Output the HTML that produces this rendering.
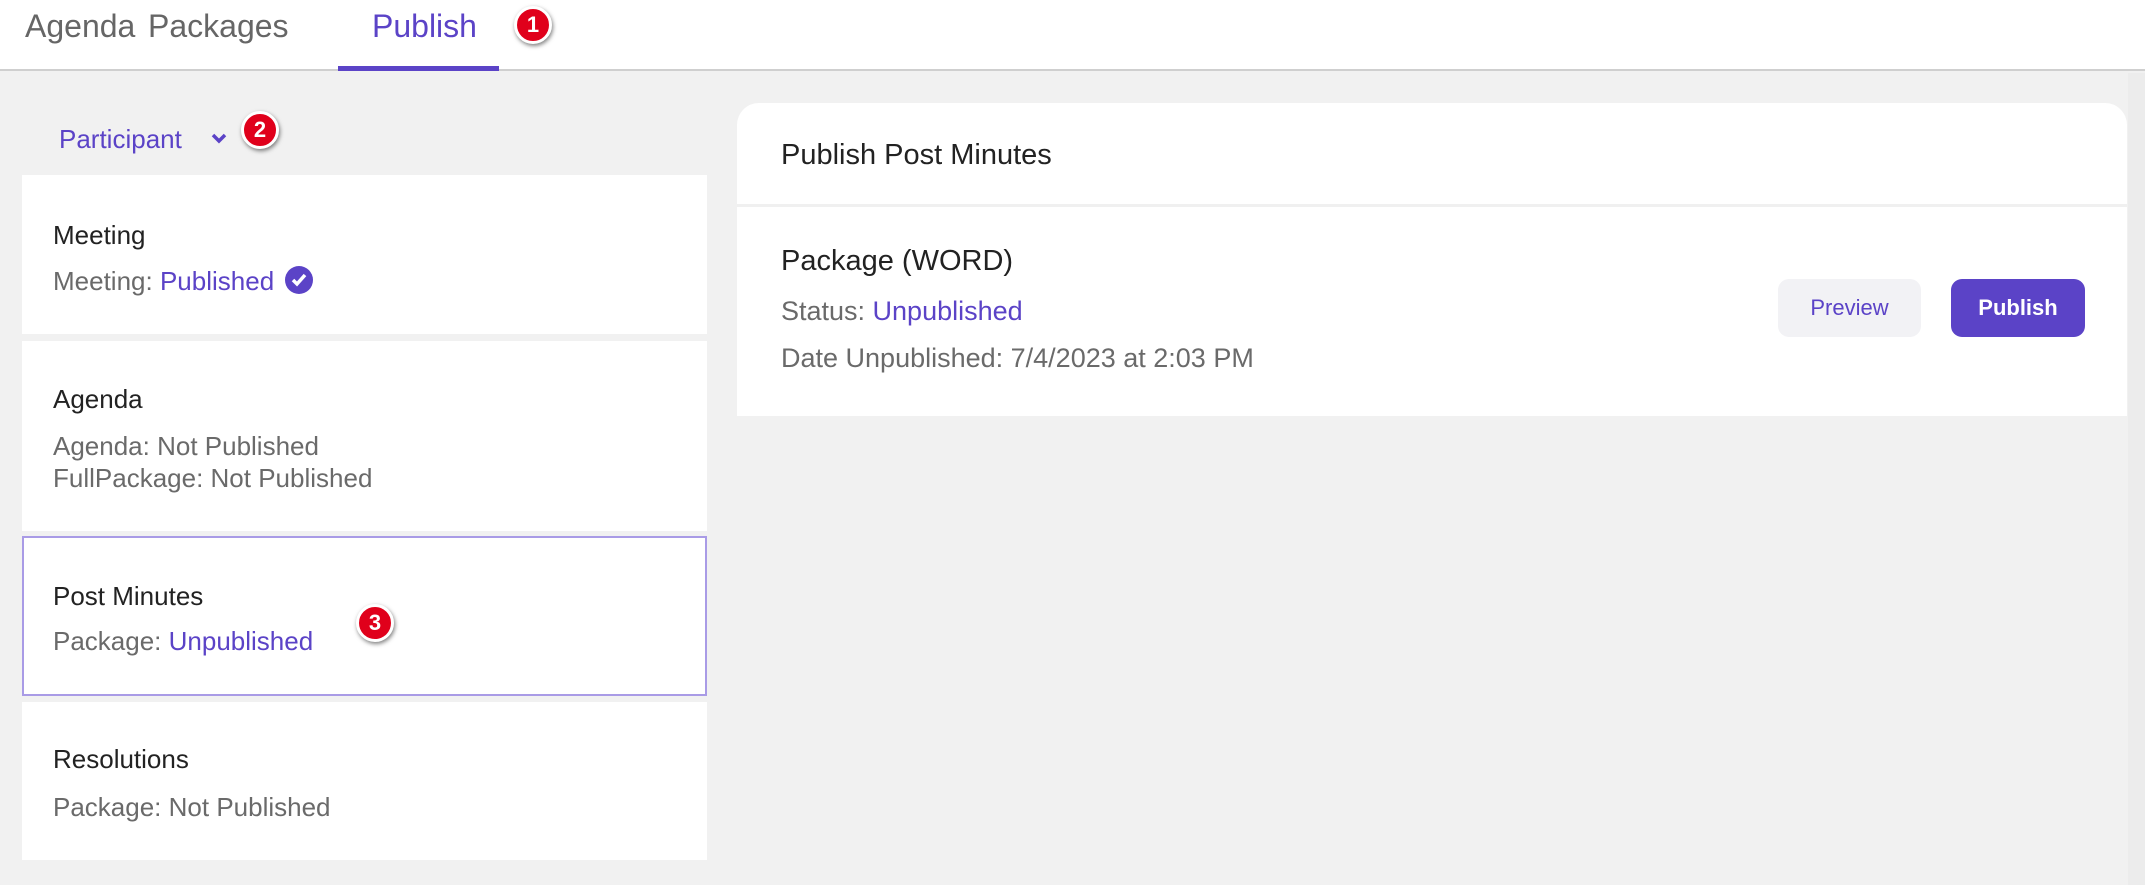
<!DOCTYPE html>
<html><head><meta charset="utf-8"><style>
*{margin:0;padding:0;box-sizing:border-box}
body{width:2145px;height:885px;background:#f1f1f1;font-family:"Liberation Sans",sans-serif;position:relative;overflow:hidden}
.top{position:absolute;left:0;top:0;width:2145px;height:71px;background:#fff;border-bottom:2px solid #cfcfcf}
.tab{position:absolute;top:8px;font-size:32px;color:#666}
.ul{position:absolute;left:338px;top:66px;width:161px;height:5px;background:#5b43c7}
.badge{position:absolute;width:38px;height:38px;border-radius:50%;background:#e0001b;border:3px solid #fff;box-shadow:1px 2px 4px rgba(0,0,0,.5);color:#fff;font-weight:bold;font-size:22px;text-align:center;line-height:32px}
.card{position:absolute;left:22px;width:685px;background:#fff}
.t{position:absolute;left:31px;font-size:26px;color:#222;line-height:30px}
.s{position:absolute;left:31px;font-size:26px;color:#6a6a6a;line-height:30px}
.p{color:#5b43c7}
.panel{position:absolute;left:737px;top:103px;width:1390px;height:313px;background:#fff;border-radius:22px 22px 0 0}
.btn{position:absolute;top:279px;height:58px;border-radius:11px;font-size:22px;text-align:center;line-height:58px}
</style></head><body>
<div class="top">
<div class="tab" style="left:25px">Agenda</div>
<div class="tab" style="left:148px">Packages</div>
<div class="tab" style="left:372px;color:#5b43c7">Publish</div>
<div class="ul"></div>
</div>
<div class="badge" style="left:514px;top:6px">1</div>
<div style="position:absolute;left:59px;top:124px;font-size:26px;color:#5b43c7">Participant</div>
<svg style="position:absolute;left:210px;top:132px" width="18" height="14" viewBox="0 0 18 14"><path d="M3 3l6 6 6-6" stroke="#5b43c7" stroke-width="3.5" fill="none"/></svg>
<div class="badge" style="left:241px;top:111px">2</div>

<div class="card" style="top:175px;height:159px">
<div class="t" style="top:45px">Meeting</div>
<div class="s" style="top:91px">Meeting: <span class="p">Published</span>
<svg style="vertical-align:-4px;margin-left:4px" width="28" height="28" viewBox="0 0 28 28"><circle cx="14" cy="14" r="14" fill="#5b43c7"/><path d="M8 14l4 4 8-9" stroke="#fff" stroke-width="3.5" fill="none"/></svg></div>
</div>
<div class="card" style="top:341px;height:190px">
<div class="t" style="top:43px">Agenda</div>
<div class="s" style="top:90px">Agenda: Not Published</div>
<div class="s" style="top:122px">FullPackage: Not Published</div>
</div>
<div class="card" style="top:536px;height:160px;border:2px solid #a99be6">
<div class="t" style="top:43px;left:29px">Post Minutes</div>
<div class="s" style="top:88px;left:29px">Package: <span class="p">Unpublished</span></div>
</div>
<div class="badge" style="left:356px;top:604px">3</div>
<div class="card" style="top:702px;height:158px">
<div class="t" style="top:42px">Resolutions</div>
<div class="s" style="top:90px">Package: Not Published</div>
</div>

<div class="panel">
<div style="position:absolute;left:44px;top:36px;font-size:29px;color:#222">Publish Post Minutes</div>
<div style="position:absolute;left:0;top:101px;width:100%;height:3px;background:#f0f0f0"></div>
</div>
<div style="position:absolute;left:781px;top:245px;font-size:29px;color:#222">Package (WORD)</div>
<div class="s" style="left:781px;top:296px;font-size:27px">Status: <span class="p">Unpublished</span></div>
<div class="s" style="left:781px;top:343px;font-size:27px">Date Unpublished: 7/4/2023 at 2:03 PM</div>
<div class="btn" style="left:1778px;width:143px;background:#f2f2f5;color:#5b43c7">Preview</div>
<div class="btn" style="left:1951px;width:134px;background:#5b43c7;color:#fff;font-weight:bold">Publish</div>
<div style="position:absolute;left:2128px;top:73px;width:17px;height:812px;background:#ececec"></div>
</body></html>
